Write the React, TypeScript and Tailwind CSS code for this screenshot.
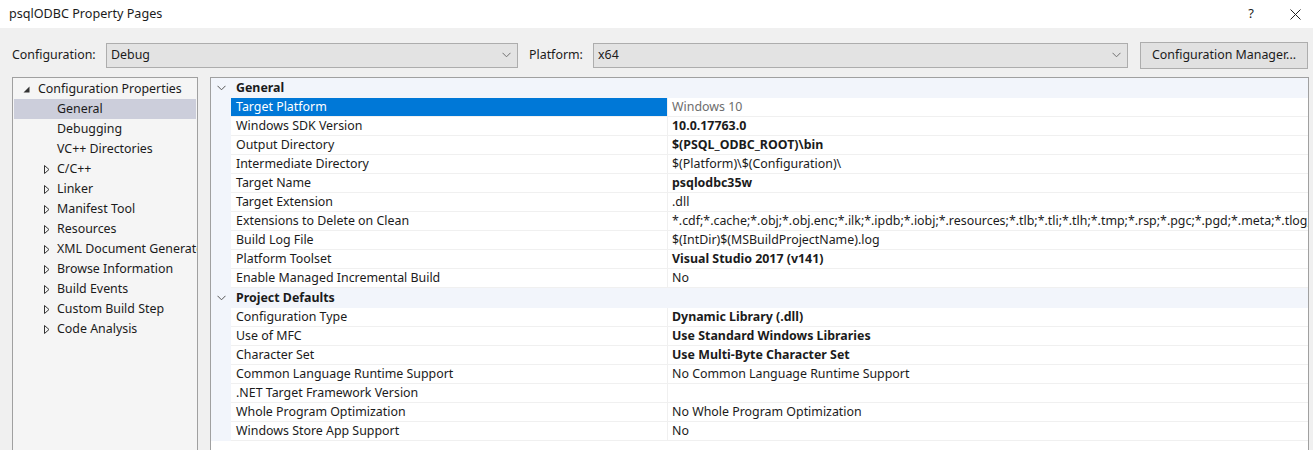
import React from "react";

type Row =
    | { kind: "header"; label: string }
    | { kind: "prop"; name: string; value: string; bold?: boolean; selected?: boolean };

const rows: Row[] = [
    { kind: "header", label: "General" },
    { kind: "prop", name: "Target Platform", value: "Windows 10", selected: true },
    { kind: "prop", name: "Windows SDK Version", value: "10.0.17763.0", bold: true },
    { kind: "prop", name: "Output Directory", value: "$(PSQL_ODBC_ROOT)\\bin", bold: true },
    { kind: "prop", name: "Intermediate Directory", value: "$(Platform)\\$(Configuration)\\" },
    { kind: "prop", name: "Target Name", value: "psqlodbc35w", bold: true },
    { kind: "prop", name: "Target Extension", value: ".dll" },
    {
        kind: "prop",
        name: "Extensions to Delete on Clean",
        value: "*.cdf;*.cache;*.obj;*.obj.enc;*.ilk;*.ipdb;*.iobj;*.resources;*.tlb;*.tli;*.tlh;*.tmp;*.rsp;*.pgc;*.pgd;*.meta;*.tlog;*.manifest;*.res;*.pch;*.exp;*.idb;*.rep;*.xdc;*.pdb;*_manifest.rc;*.bsc;*.sbr;*.xml;*.metagen;*.bi",
    },
    { kind: "prop", name: "Build Log File", value: "$(IntDir)$(MSBuildProjectName).log" },
    { kind: "prop", name: "Platform Toolset", value: "Visual Studio 2017 (v141)", bold: true },
    { kind: "prop", name: "Enable Managed Incremental Build", value: "No" },
    { kind: "header", label: "Project Defaults" },
    { kind: "prop", name: "Configuration Type", value: "Dynamic Library (.dll)", bold: true },
    { kind: "prop", name: "Use of MFC", value: "Use Standard Windows Libraries", bold: true },
    { kind: "prop", name: "Character Set", value: "Use Multi-Byte Character Set", bold: true },
    { kind: "prop", name: "Common Language Runtime Support", value: "No Common Language Runtime Support" },
    { kind: "prop", name: ".NET Target Framework Version", value: "" },
    { kind: "prop", name: "Whole Program Optimization", value: "No Whole Program Optimization" },
    { kind: "prop", name: "Windows Store App Support", value: "No" },
];

const treeItems = [
    "C/C++",
    "Linker",
    "Manifest Tool",
    "Resources",
    "XML Document Generator",
    "Browse Information",
    "Build Events",
    "Custom Build Step",
    "Code Analysis",
];

function Chevron({ className }: { className?: string }) {
    return (
        <svg width="9" height="6" viewBox="0 0 9 6" className={className}>
            <path d="M0.5 0.8 L4.5 4.8 L8.5 0.8" fill="none" stroke="currentColor" strokeWidth="1" />
        </svg>
    );
}

function Combo({ value, className }: { value: string; className?: string }) {
    return (
        <div className={`flex h-[25px] items-center justify-between border border-[#adadad] bg-[#e3e3e3] pl-[4px] pr-[6px] ${className ?? ""}`}>
            <span>{value}</span>
            <Chevron className="text-[#707070]" />
        </div>
    );
}

export default function App() {
    return (
        <div className="h-[450px] w-[1313px] overflow-hidden bg-[#f0f0f0] text-[12.4px] text-[#1b1b1b] font-['Noto_Sans',sans-serif]">
            {/* Title bar */}
            <div className="flex h-[28px] items-center justify-between bg-white pl-[9px]">
                <span className="text-[12.6px]">psqlODBC Property Pages</span>
                <div className="flex items-center">
                    <span className="mr-[4px] w-[44px] text-center text-[13px]">?</span>
                    <div className="flex w-[36px] justify-center">
                        <svg width="11" height="11" viewBox="0 0 11 11">
                            <path d="M0.5 0.5 L10.5 10.5 M10.5 0.5 L0.5 10.5" stroke="#222" strokeWidth="1" />
                        </svg>
                    </div>
                </div>
            </div>

            {/* Configuration row */}
            <div className="flex h-[49px] items-center pl-[12px] pr-[5px] pt-[5px]">
                <span className="w-[94px]">Configuration:</span>
                <Combo value="Debug" className="w-[412px]" />
                <span className="ml-[11px] w-[64px]">Platform:</span>
                <Combo value="x64" className="w-[535px]" />
                <button className="ml-[12px] h-[27px] w-[168px] border border-[#adadad] bg-[#e1e1e1] text-center">
                    Configuration Manager...
                </button>
            </div>

            {/* Body */}
            <div className="flex h-[373px] pl-[12px] pr-[4px]">
                {/* Tree */}
                <div className="h-[400px] w-[186px] shrink-0 overflow-hidden border border-[#a0a0a0] bg-[#f5f5f5] pt-[1px]">
                    <div className="flex h-[20px] items-center whitespace-nowrap">
                        <svg width="7" height="7" viewBox="0 0 7 7" className="ml-[10px] mr-[8px] shrink-0">
                            <path d="M6.5 0.5 L6.5 6.5 L0.5 6.5 Z" fill="#333" />
                        </svg>
                        <span>Configuration Properties</span>
                    </div>
                    <div className="mx-[1px] flex h-[20px] items-center bg-[#cccedb] pl-[43px]">General</div>
                    <div className="flex h-[20px] items-center pl-[44px]">Debugging</div>
                    <div className="flex h-[20px] items-center pl-[44px]">VC++ Directories</div>
                    {treeItems.map((t) => (
                        <div key={t} className="flex h-[20px] items-center overflow-hidden whitespace-nowrap">
                            <svg width="6" height="9" viewBox="0 0 6 9" className="ml-[31px] mr-[7px] shrink-0">
                                <path d="M0.5 0.5 L5 4.5 L0.5 8.5 Z" fill="none" stroke="#333" strokeWidth="1" />
                            </svg>
                            <span>{t}</span>
                        </div>
                    ))}
                </div>

                {/* Property grid */}
                <div className="ml-[12px] h-[400px] min-w-0 flex-1 overflow-hidden border border-[#a0a0a0] bg-white">
                    {rows.map((r, i) =>
                        r.kind === "header" ? (
                            <div key={i} className="flex h-[20px] items-center bg-[#f2f5fb]">
                                <div className="flex w-[20px] justify-center">
                                    <Chevron className="text-[#555]" />
                                </div>
                                <span className="pl-[5px] font-bold">{r.label}</span>
                            </div>
                        ) : (
                            <div key={i} className="flex h-[19px]">
                                <div className="w-[20px] shrink-0 bg-[#f2f5fb]" />
                                <div
                                    className={`flex w-[436px] shrink-0 items-center border-b border-[#f0f0f0] pl-[5px] whitespace-nowrap ${
                                        r.selected ? "bg-[#0078d7] text-white" : ""
                                    }`}
                                >
                                    {r.name}
                                </div>
                                <div
                                    className={`flex min-w-0 flex-1 items-center overflow-hidden border-b border-l border-[#f0f0f0] pl-[4px] whitespace-nowrap ${
                                        r.bold ? "font-bold" : ""
                                    } ${r.selected ? "text-[#6d6d6d]" : ""}`}
                                >
                                    {r.value}
                                </div>
                            </div>
                        )
                    )}
                </div>
            </div>
        </div>
    );
}
